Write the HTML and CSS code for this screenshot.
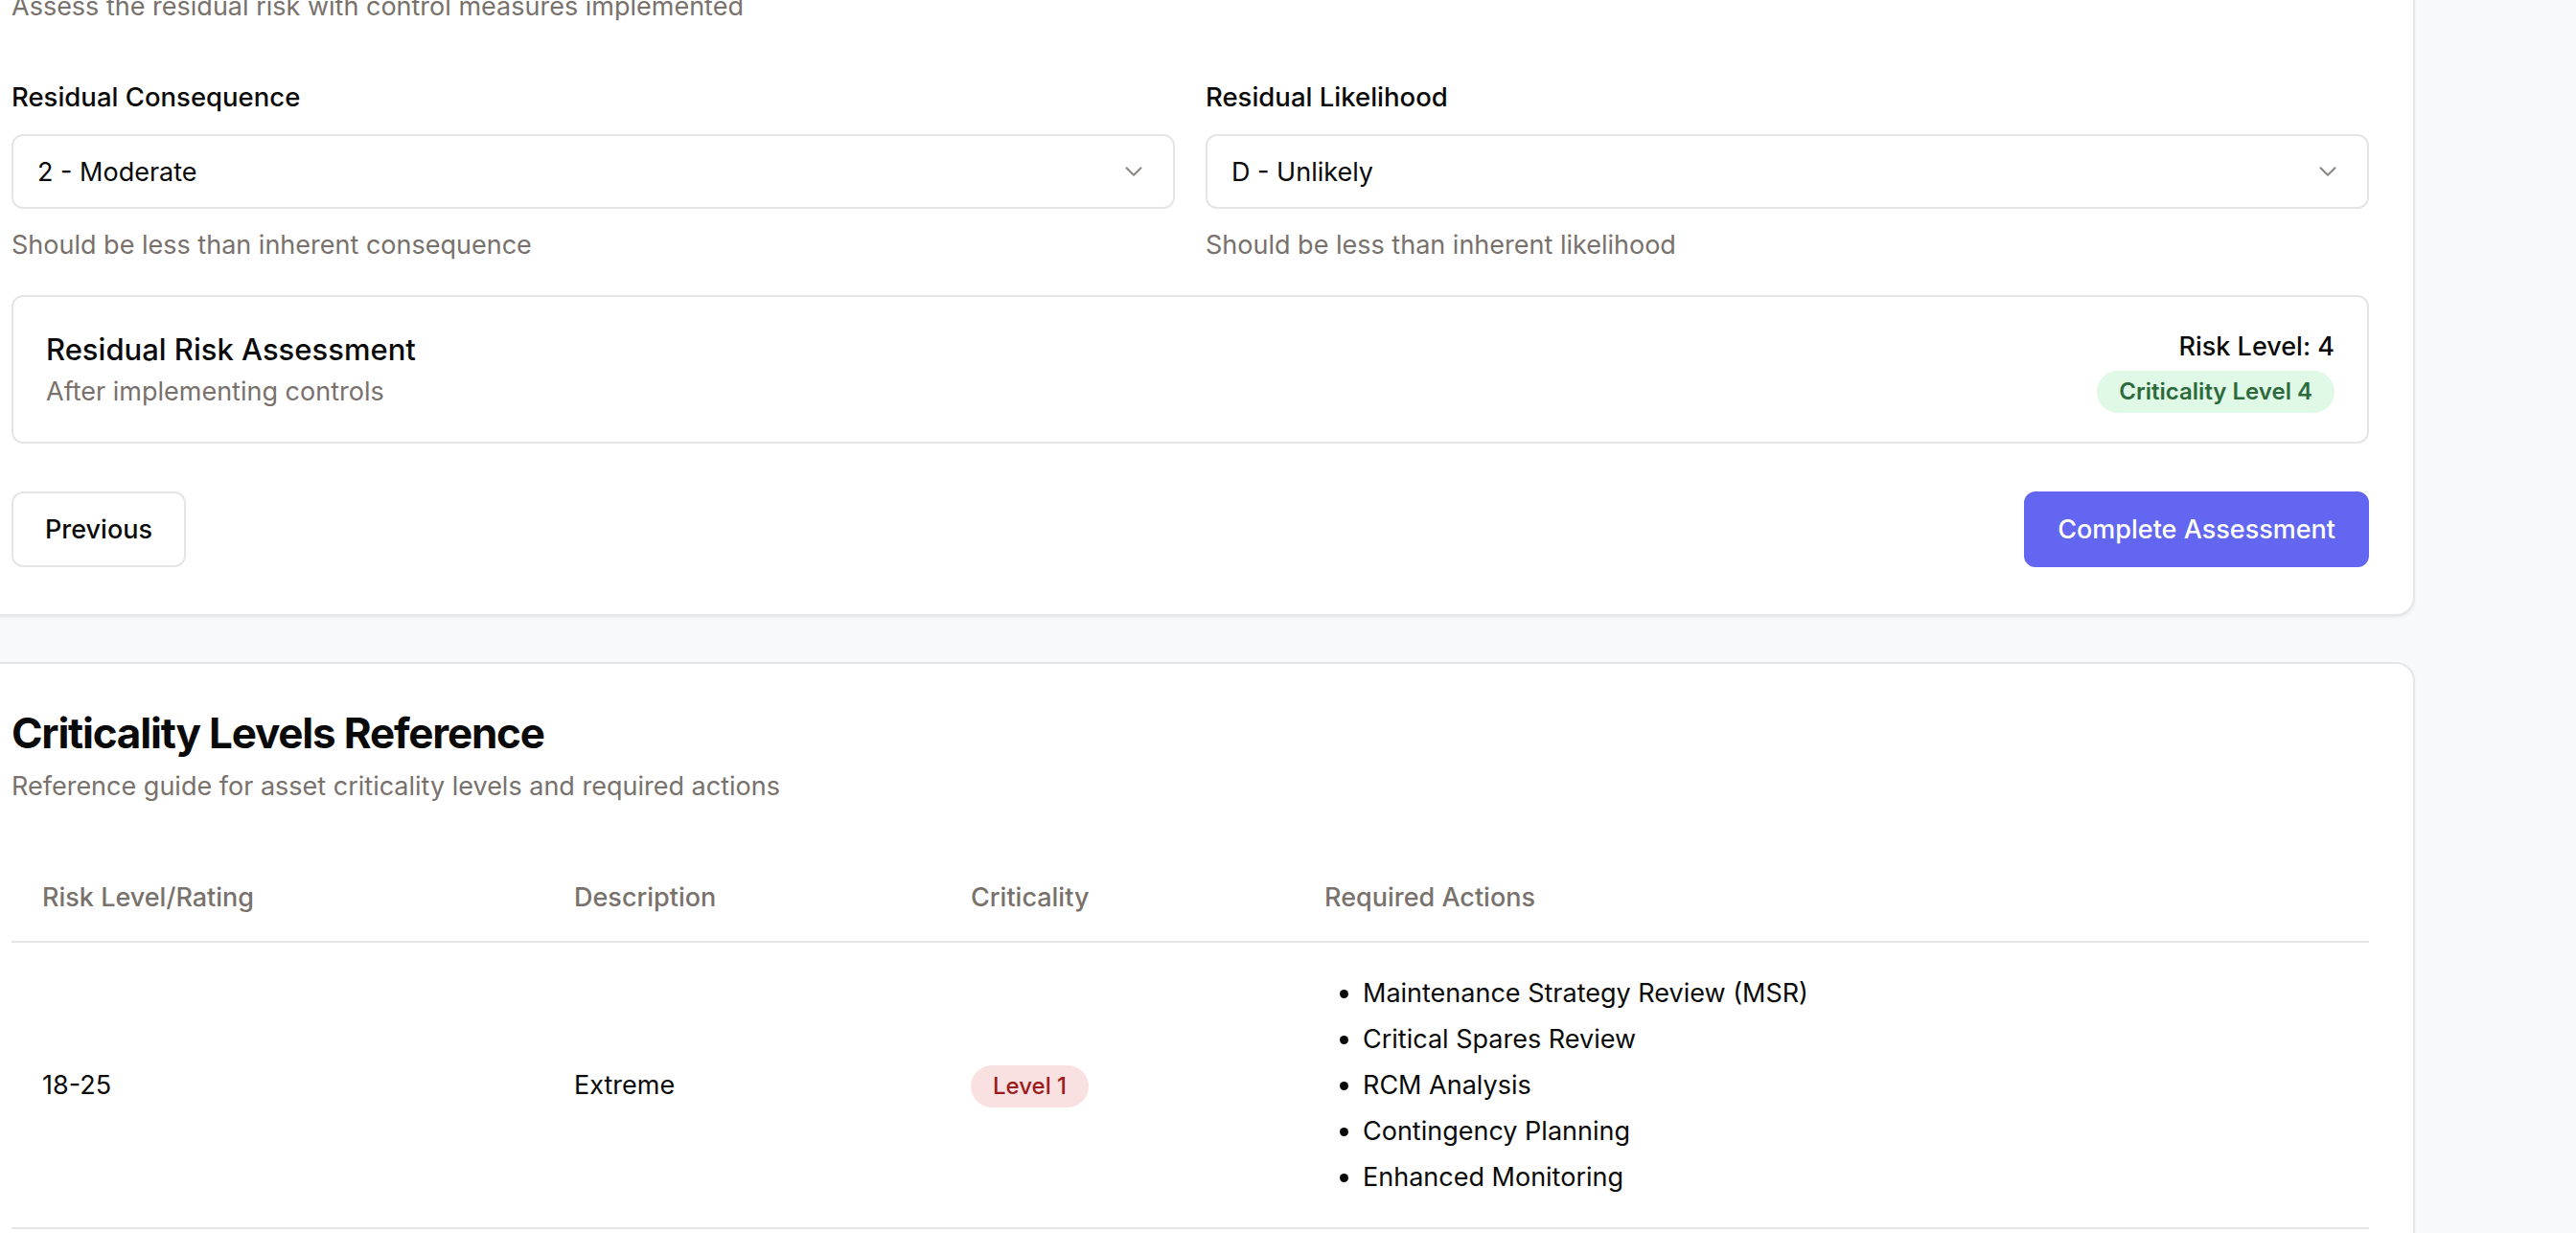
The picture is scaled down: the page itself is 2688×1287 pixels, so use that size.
FILE: index.html
```html
<!DOCTYPE html>
<html lang="en">
<head>
<meta charset="utf-8">
<title>Risk Assessment</title>
<link rel="stylesheet" href="styles.css">
</head>
<body>
<div class="page">
  <section class="card card-assess">
    <p class="desc">Assess the residual risk with control measures implemented</p>
    <div class="fields">
      <div class="field">
        <label class="field-label">Residual Consequence</label>
        <div class="select">
          <span>2 - Moderate</span>
          <svg class="chev" viewBox="0 0 24 24" fill="none" stroke="currentColor" stroke-width="1.6" stroke-linecap="round" stroke-linejoin="round"><path d="m6 9 6 6 6-6"/></svg>
        </div>
        <p class="hint">Should be less than inherent consequence</p>
      </div>
      <div class="field">
        <label class="field-label">Residual Likelihood</label>
        <div class="select">
          <span>D - Unlikely</span>
          <svg class="chev" viewBox="0 0 24 24" fill="none" stroke="currentColor" stroke-width="1.6" stroke-linecap="round" stroke-linejoin="round"><path d="m6 9 6 6 6-6"/></svg>
        </div>
        <p class="hint">Should be less than inherent likelihood</p>
      </div>
    </div>
    <div class="result">
      <div class="result-info">
        <h4 class="result-title">Residual Risk Assessment</h4>
        <p class="result-sub">After implementing controls</p>
      </div>
      <div class="result-level">
        <div class="risk">Risk Level: 4</div>
        <span class="badge badge-green">Criticality Level 4</span>
      </div>
    </div>
    <div class="actions">
      <button class="btn btn-outline">Previous</button>
      <button class="btn btn-primary">Complete Assessment</button>
    </div>
  </section>

  <section class="card card-ref">
    <h2 class="ref-title">Criticality Levels Reference</h2>
    <p class="ref-sub">Reference guide for asset criticality levels and required actions</p>
    <table class="ref-table">
      <colgroup>
        <col class="c1"><col class="c2"><col class="c3"><col class="c4">
      </colgroup>
      <thead>
        <tr>
          <th>Risk Level/Rating</th>
          <th>Description</th>
          <th>Criticality</th>
          <th>Required Actions</th>
        </tr>
      </thead>
      <tbody>
        <tr>
          <td>18-25</td>
          <td>Extreme</td>
          <td><span class="badge badge-red">Level 1</span></td>
          <td>
            <ul class="actions-list">
              <li>Maintenance Strategy Review (MSR)</li>
              <li>Critical Spares Review</li>
              <li>RCM Analysis</li>
              <li>Contingency Planning</li>
              <li>Enhanced Monitoring</li>
            </ul>
          </td>
        </tr>
      </tbody>
    </table>
  </section>
</div>
</body>
</html>
```
FILE: styles.css
```css
html, body {
  margin: 0;
  padding: 0;
  height: 100%;
  overflow: hidden;
}
body {
  background: #f8f9fa;
  font-family: Inter, "Noto Sans", sans-serif;
  color: #0a0a0a;
}
p, h2, h4 { margin: 0; }

.page {
  width: 2556px;
  margin-left: -36px;
  margin-top: -61px;
}

.card {
  background: #ffffff;
  border: 2px solid #e6e6e6;
  border-radius: 20px;
  padding: 46px;
  box-shadow: 0 2px 3px rgba(0, 0, 0, 0.05);
}

.card-assess {
  padding-bottom: 49px;
}

.card-ref {
  margin-top: 48px;
}

.desc, .hint, .result-sub, .ref-sub {
  color: #78716c;
  font-size: 27px;
  line-height: 40px;
}

.fields {
  display: grid;
  grid-template-columns: 1fr 1fr;
  column-gap: 32px;
  margin-top: 54px;
}

.field-label {
  display: block;
  font-size: 27.5px;
  line-height: 41px;
  font-weight: 500;
  margin-bottom: 18px;
}

.select {
  height: 78px;
  box-sizing: border-box;
  border: 2px solid #e5e5e5;
  border-radius: 12px;
  padding: 0 26px 0 25px;
  display: flex;
  align-items: center;
  justify-content: space-between;
  font-size: 27px;
}

.chev {
  width: 30px;
  height: 30px;
  color: #8a8580;
}

.hint {
  margin-top: 18px;
}

.result {
  margin-top: 32px;
  height: 155px;
  box-sizing: border-box;
  border: 2px solid #e5e5e5;
  border-radius: 12px;
  padding: 0 34px;
  display: flex;
  align-items: center;
  justify-content: space-between;
}

.result-title {
  font-size: 31px;
  line-height: 44px;
  font-weight: 500;
}

.result-sub {
  margin-top: 2px;
}

.result-level {
  display: flex;
  flex-direction: column;
  align-items: flex-end;
}

.risk {
  font-size: 27px;
  line-height: 41px;
  font-weight: 500;
  margin-bottom: 5px;
}

.badge {
  display: inline-flex;
  align-items: center;
  height: 44px;
  padding: 0 23px;
  border-radius: 22px;
  font-size: 24px;
  font-weight: 600;
}

.badge-green {
  background: #e0f8e6;
  color: #2c6a3c;
}

.badge-red {
  background: #f9e1e1;
  color: #9b1c1c;
  font-weight: 500;
}

.actions {
  margin-top: 50px;
  display: flex;
  justify-content: space-between;
}

.btn {
  height: 79px;
  box-sizing: border-box;
  border-radius: 12px;
  font-family: inherit;
  font-size: 27px;
  font-weight: 500;
  padding: 0 33px;
  cursor: pointer;
}

.btn-outline {
  background: #ffffff;
  border: 2px solid #e5e5e5;
  color: #0a0a0a;
}

.btn-primary {
  background: #6366f1;
  border: 2px solid #6366f1;
  color: #ffffff;
}

.ref-title {
  font-size: 44px;
  line-height: 53px;
  font-weight: 700;
  letter-spacing: -1.2px;
}

.ref-sub {
  margin-top: 9px;
}

.ref-table {
  margin-top: 50px;
  width: 100%;
  border-collapse: collapse;
  table-layout: fixed;
}

.c1 { width: 555px; }
.c2 { width: 414px; }
.c3 { width: 369px; }

.ref-table th {
  text-align: left;
  font-size: 27px;
  line-height: 38px;
  font-weight: 500;
  color: #78716c;
  padding: 27px 32px 26px;
  border-bottom: 2px solid #e5e5e5;
}

.ref-table td {
  font-size: 27px;
  line-height: 48px;
  padding: 29px 32px 28px;
  vertical-align: middle;
  border-bottom: 2px solid #e5e5e5;
}

.actions-list {
  margin: 0;
  padding-left: 40px;
  list-style: disc;
}
```
